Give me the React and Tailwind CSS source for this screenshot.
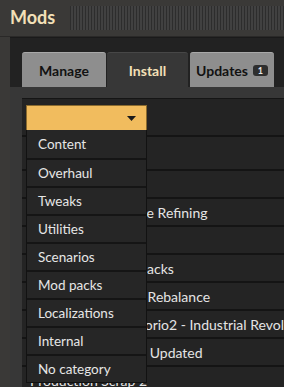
import React from "react";

const rows = [
  { h: "h-[34px]", t: "" },
  { h: "h-[28px]", t: "" },
  { h: "h-[28px]", t: "Bob's Advanced Ore Refining" },
  { h: "h-[28px]", t: "" },
  { h: "h-[28px]", t: "Automatic Lumberjacks" },
  { h: "h-[28px]", t: "Vanilla Armaments Rebalance" },
  { h: "h-[28px]", t: "Compat with Krastorio2 - Industrial Revolution" },
  { h: "h-[28px]", t: "Bobs Warfare Mod Updated" },
  { h: "h-[28px]", t: "Production Scrap 2" },
];

const cats = [
  "Content",
  "Overhaul",
  "Tweaks",
  "Utilities",
  "Scenarios",
  "Mod packs",
  "Localizations",
  "Internal",
  "No category",
];

export default function App() {
  return (
    <div className="relative w-[284px] h-[387px] overflow-hidden bg-[#3a3937] font-['Lato',sans-serif]">
      {/* title bar */}
      <div className="flex items-center h-[37px] pl-[10px] border-b border-[#2a2928]">
        <span className="text-[18px] font-bold leading-none text-[#f3e0b8] -mt-[3px]">Mods</span>
        <div className="ml-[15px] flex-1 h-[24px] -mt-[1px] bg-[repeating-linear-gradient(90deg,#2d2d2d_0px,#2d2d2d_1px,#414141_1px,#414141_3px)]" />
      </div>

      {/* inset */}
      <div className="ml-[10px] bg-[#222222] border-t border-[#1a1a1a] h-full">
        <div className="flex pt-[14px] pl-[12px] h-[49px]">
          <div className="w-[84px] h-[35px] rounded-t-[3px] bg-[#8e8e8e] border-t border-[#a9a9a9] flex items-center justify-center text-[14px] font-bold text-[#121212]">
            Manage
          </div>
          <div className="ml-[1px] w-[81px] h-[35px] rounded-t-[3px] bg-[#373737] border-t border-[#474747] flex items-center justify-center text-[14px] font-bold text-[#f3e0b8]">
            Install
          </div>
          <div className="ml-[2px] w-[84px] h-[35px] rounded-t-[3px] bg-[#8e8e8e] border-t border-[#a9a9a9] flex items-center justify-center gap-[5px] text-[14px] font-bold text-[#121212]">
            <span>Updates</span>
            <span className="w-[15px] h-[11px] rounded-[3px] bg-[#2e2e2e] text-[9px] leading-[11px] text-center text-[#e8e8e8]">1</span>
          </div>
        </div>

        {/* panel */}
        <div className="bg-[#373737] pl-[12px] pt-[11px] h-full">
          <div className="bg-[#1c1c1c] border-t border-[#151515] h-full">
            <div className="h-[36px] bg-[#232323] pt-[6px] pl-[4px]">
              <div className="w-[121px] h-[26px] bg-[#f1bc5e] border border-[#8a6a2e] flex items-center justify-end pr-[10px]">
                <svg width="9" height="5" viewBox="0 0 9 5">
                  <path d="M0 0H9L4.5 5Z" fill="#1a1a1a" />
                </svg>
              </div>
            </div>
            {rows.map((r, i) => (
              <div
                key={i}
                className={`${r.h} bg-[#242424] border-t-2 border-[#141414] flex items-center pl-[8px] text-[14px] text-[#e4e4e4] whitespace-nowrap`}
              >
                {r.t}
              </div>
            ))}
          </div>
        </div>
      </div>

      {/* dropdown list */}
      <div className="absolute left-[26px] top-[130px] w-[121px] bg-[#262626] border-x border-b border-[#121212]">
        {cats.map((c, i) => (
          <div
            key={c}
            className={`h-[28px] flex items-center pl-[11px] text-[13.5px] text-[#e6e6e6] ${i > 0 ? "border-t-2 border-[#151515]" : ""}`}
          >
            {c}
          </div>
        ))}
      </div>
    </div>
  );
}
